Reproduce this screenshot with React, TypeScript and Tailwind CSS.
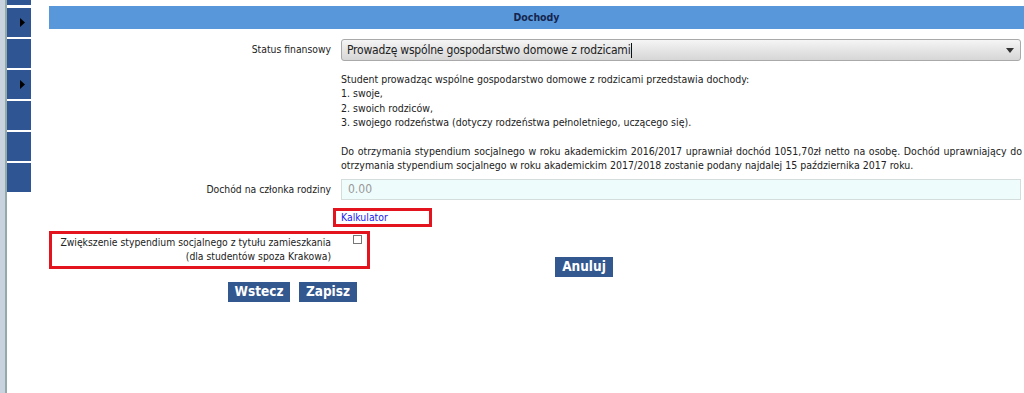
import React from "react";

const font = { fontFamily: '"DejaVu Sans Condensed", "DejaVu Sans", sans-serif', fontStretch: "condensed" as const };

function Sidebar() {
  const blocks = [0, 1, 2, 3, 4, 5];
  return (
    <div className="flex h-[393px] w-[32px] shrink-0">
      <div className="w-[5px] bg-[#c9d3df]" />
      <div className="w-[2px] bg-[#93aaa9]" />
      <div className="flex w-[24px] flex-col">
        <div className="h-[5px] bg-[#2f5593]" />
        <div className="mt-[3px] flex flex-col gap-[2px]">
          {blocks.map((i) => (
            <div key={i} className="flex h-[29px] items-center bg-[#2f5593] pl-[13px]">
              {(i === 0 || i === 2) && (
                <svg width="5" height="9" viewBox="0 0 5 9">
                  <path d="M0 0 L5 4.5 L0 9 Z" fill="#000" />
                </svg>
              )}
            </div>
          ))}
        </div>
      </div>
    </div>
  );
}

function Btn({ children, w }: { children: React.ReactNode; w: string }) {
  return (
    <div
      className={`flex h-[20px] ${w} items-center justify-center bg-[#33578f] text-[13.5px] font-bold leading-none text-white`}
    >
      {children}
    </div>
  );
}

export default function App() {
  return (
    <div className="flex h-[393px] w-[1024px] overflow-hidden bg-white text-[#222]" style={font}>
      <Sidebar />
      <div className="ml-[17px] flex w-[975px] flex-col">
        <div className="mt-[6px] flex h-[23px] items-center justify-center bg-[#5898da] text-[10.5px] font-bold text-[#15254f]">
          Dochody
        </div>

        <div className="mt-[10px] flex items-center">
          <div className="w-[282px] text-right text-[10.3px]">Status finansowy</div>
          <div className="ml-[10px] flex h-[22px] w-[680px] items-center justify-between rounded-[3px] border border-[#a9a9a9] bg-gradient-to-b from-[#f5f5f5] to-[#d6d6d6] pl-[5px] pr-[6px]">
            <span className="flex items-center text-[12px] tracking-[-0.2px] text-[#222]">
              Prowadzę wspólne gospodarstwo domowe z rodzicami
              <span className="ml-[1px] inline-block h-[15px] w-[1px] bg-[#111]" />
            </span>
            <svg width="8" height="5" viewBox="0 0 8 5">
              <path d="M0 0 L8 0 L4 5 Z" fill="#333" />
            </svg>
          </div>
        </div>

        <div className="mt-[11px] ml-[292px] w-[681px] text-[10.5px] leading-[14.4px]">
          <div>Student prowadząc wspólne gospodarstwo domowe z rodzicami przedstawia dochody:</div>
          <div>1. swoje,</div>
          <div>2. swoich rodziców,</div>
          <div>3. swojego rodzeństwa (dotyczy rodzeństwa pełnoletniego, uczącego się).</div>
          <div className="h-[14.4px]" />
          <div className="text-justify" style={{ textAlignLast: "justify" }}>
            Do otrzymania stypendium socjalnego w roku akademickim 2016/2017 uprawniał dochód 1051,70zł netto na osobę. Dochód uprawniający do
          </div>
          <div>
            otrzymania stypendium socjalnego w roku akademickim 2017/2018 zostanie podany najdalej 15 października 2017 roku.
          </div>
        </div>

        <div className="mt-[6px] flex items-center">
          <div className="w-[282px] text-right text-[10.3px]">Dochód na członka rodziny</div>
          <div className="ml-[10px] flex h-[21px] w-[680px] items-center border border-[#d5dcdc] bg-[#effcfc] pl-[6px] text-[12px] text-[#999]">
            0.00
          </div>
        </div>

        <div className="mt-[8px] flex">
          <div className="ml-[284px] flex h-[19px] w-[99px] items-center border-[3px] border-[#e4141e] pl-[5px] text-[10.4px] text-[#1a1aee]">
            Kalkulator
          </div>
        </div>

        <div className="mt-[4px] flex h-[38px] w-[321px] border-[3px] border-[#e4141e]">
          <div className="w-[279px] whitespace-nowrap pt-[1px] text-right text-[10.3px] leading-[14.4px]">
            Zwiększenie stypendium socjalnego z tytułu zamieszkania
            <br />
            (dla studentów spoza Krakowa)
          </div>
          <div className="ml-[22px] mt-[1px] h-[9px] w-[9px] border border-[#777] bg-white" />
        </div>

        <div className="mt-[-12px] flex">
          <div className="ml-[506px]">
            <Btn w="w-[58px]">Anuluj</Btn>
          </div>
        </div>

        <div className="mt-[5px] flex gap-[9px] pl-[179px]">
          <Btn w="w-[62px]">Wstecz</Btn>
          <Btn w="w-[58px]">Zapisz</Btn>
        </div>
      </div>
    </div>
  );
}
